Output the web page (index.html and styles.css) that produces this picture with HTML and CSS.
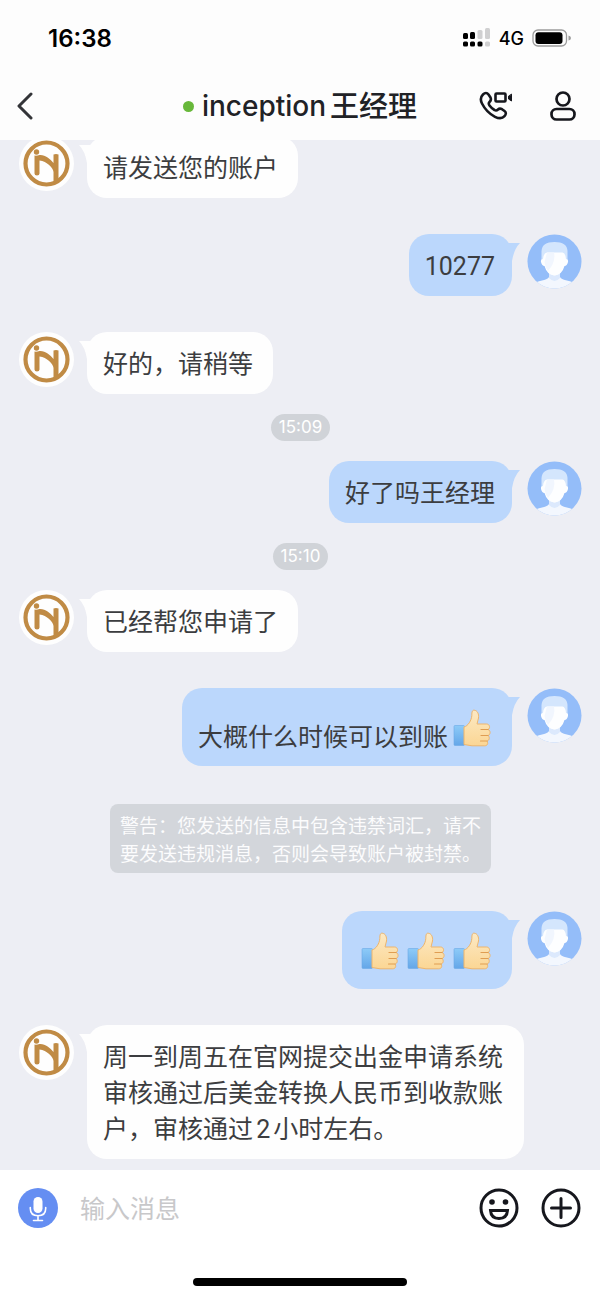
FILE: index.html
```html
<!DOCTYPE html>
<html lang="zh-CN">
<head>
<meta charset="utf-8">
<meta name="viewport" content="width=device-width, initial-scale=1">
<title>inception王经理</title>
<link rel="stylesheet" href="styles.css">
</head>
<body>
<!-- shared drawings -->
<svg class="sprite" aria-hidden="true">
  <defs>
    <linearGradient id="skin" x1="0" y1="0" x2="0" y2="1">
      <stop offset="0" stop-color="#fce9c4"/>
      <stop offset="1" stop-color="#fbd694"/>
    </linearGradient>
    <linearGradient id="cuff" x1="0" y1="0" x2="0" y2="1">
      <stop offset="0" stop-color="#8dcbf8"/>
      <stop offset="1" stop-color="#64a6e8"/>
    </linearGradient>
    <clipPath id="round"><circle cx="27.5" cy="27.5" r="27"/></clipPath>
  </defs>
  <symbol id="logo" viewBox="0 0 55 55">
    <circle cx="27.5" cy="27.5" r="27.5" fill="#fefefe"/>
    <circle cx="27.5" cy="27.5" r="21" fill="none" stroke="#c08b45" stroke-width="4.200"/>
    <circle cx="17.500" cy="16" r="2.700" fill="#c08b45"/>
    <path d="M15.500 19.500Q17.500 20 20.500 19C26 18.500 31 22.500 34.500 27V18.500Q37 17.500 39.500 18.500V43L34.500 47.500V36C34 31.500 28 25.500 20.500 24.500V37.500Q20.500 39.500 18 39.500Q15.500 39.500 15.500 37.500Z" fill="#c08b45"/>
  </symbol>
  <symbol id="user" viewBox="0 0 55 55">
    <g clip-path="url(#round)">
      <rect width="55" height="55" fill="#94bdf9"/>
      <path d="M8 49C13 46 20 46.500 22 43V35H33V43C35 46.500 42 46 47 49V55H8Z" fill="#f3f7fe"/>
      <path d="M22 37Q27.500 46 33 37V44Q27.500 50 22 44Z" fill="#dce9fd"/>
      <path d="M14.500 27V17Q15 8 27.500 8Q40 8 40.500 17V27Z" fill="#d4e6fd"/>
      <path d="M16 25Q13.500 25 14 28Q15 32 17.500 32Q20 41 27.500 41.500Q35 41 37.500 32Q40 32 41 28Q41.500 25 39 25Q38.500 19 35.500 18.500H20Q16.500 19 16 25Z" fill="#fdfeff"/>
      <path d="M20 18.500H27Q29 28 21 37Q18 33 17.500 28Z" fill="#f1f6fe"/>
    </g>
  </symbol>
  <symbol id="thumb" viewBox="0 0 38 38">
    <rect x="1" y="16.500" width="10.500" height="20" rx="1" fill="url(#cuff)" stroke="#6ba9e6" stroke-width=".6"/>
    <path d="M11 18C15 17 18.500 11.500 18.800 6.500C18.800 2.500 19.500 1 21.200 1.200C24.500 1.500 26 5 25.500 9L24 15H33.500C37 15 37.500 19.500 35 20.500C38 21.500 37.500 26 35 26.500C37 28 36.500 31.500 34 32C35.500 34.500 34.500 36.800 31.500 36.800H19C16 36.800 14 35.500 11 35.500Z" fill="url(#skin)" stroke="#eeb56c" stroke-width="1"/>
    <path d="M28 20.500H35M28 26.500H35M27.500 32H34" fill="none" stroke="#df9d52" stroke-width="1.200" stroke-linecap="round"/>
  </symbol>
  <symbol id="tail" viewBox="0 0 20 18">
    <path d="M0 0H20Q14 6 12 18H0Z"/>
  </symbol>
</svg>

<div class="app">
  <header>
    <div class="status-bar">
      <span class="clock">16:38</span>
      <div class="status-icons">
        <svg width="28" height="20" viewBox="0 0 28 20" aria-hidden="true">
          <rect x="0" y="5" width="5" height="6" rx="1.500"/>
          <rect x="7" y="4" width="5" height="7" rx="1.500"/>
          <rect x="14.500" y="2" width="5" height="9" rx="1.500" fill="#d0d0d1"/>
          <rect x="22" y="0" width="5" height="11" rx="1.500" fill="#d0d0d1"/>
          <rect x="0" y="13.500" width="5" height="5" rx="1.500"/>
          <rect x="7" y="13.500" width="5" height="5" rx="1.500"/>
          <rect x="14.500" y="13.500" width="5" height="5" rx="1.500"/>
          <rect x="22" y="13.500" width="5" height="5" rx="1.500" fill="#d0d0d1"/>
        </svg>
        <span>4G</span>
        <svg width="40" height="18" viewBox="0 0 40 18" aria-hidden="true">
          <rect x="1" y="1" width="33.500" height="16" rx="5" fill="none" stroke="#9c9c9c" stroke-width="1.300"/>
          <rect x="3.500" y="3.200" width="27" height="11.800" rx="3"/>
          <path d="M36.500 6.500Q39 7 39 9Q39 11 36.500 11.500Z" fill="#9c9c9c"/>
        </svg>
      </div>
    </div>
    <nav class="nav">
      <button class="icon-btn" aria-label="返回">
        <svg width="18" height="28" viewBox="0 0 18 28"><path d="M15 2L3 14L15 26" fill="none" stroke="#333438" stroke-width="3" stroke-linecap="round" stroke-linejoin="round"/></svg>
      </button>
      <h1><i class="online"></i>inception<span class="cn">王经理</span></h1>
      <div class="nav-actions">
        <button class="icon-btn" aria-label="通话">
          <svg width="34" height="30" viewBox="0 0 34 30" fill="none" stroke="#16171d" stroke-width="2.600" stroke-linejoin="round" stroke-linecap="round">
            <path d="M4 3.500C6 1.500 8 1.500 9.500 3.500L11.500 6.500C12.500 8.500 12 9.500 10.500 11C9.500 12 9.500 13 10.500 14.500C12 16.500 13.500 18 15.500 19C17 20 18 19.500 19 18.500C20 17.500 21.500 17.300 23 18.200L25.500 20C27.500 21.500 27 23.500 25.500 25.200C23 28 19.500 27.500 16 25.800C10.500 23 6 18.500 3 12.500C1.200 9 1.500 6 4 3.500Z"/>
            <rect x="16.500" y="2.500" width="10" height="8" rx="1"/>
            <path d="M32.500 3.500V10L29.500 8V5.500Z" fill="#16171d" stroke-width="1"/>
          </svg>
        </button>
        <button class="icon-btn" aria-label="资料">
          <svg width="26" height="30" viewBox="0 0 26 30" fill="none" stroke="#16171d" stroke-width="2.700">
            <circle cx="13" cy="8" r="6.500"/>
            <rect x="1.500" y="18" width="23" height="10.500" rx="5"/>
          </svg>
        </button>
      </div>
    </nav>
  </header>

  <main class="chat">
    <div class="msg">
      <svg class="avatar"><use href="#logo"/></svg>
      <div class="bubble"><svg class="tail"><use href="#tail"/></svg>请发送您的账户</div>
    </div>
    <div class="msg mine">
      <svg class="avatar"><use href="#user"/></svg>
      <div class="bubble"><svg class="tail"><use href="#tail"/></svg>10277</div>
    </div>
    <div class="msg">
      <svg class="avatar"><use href="#logo"/></svg>
      <div class="bubble"><svg class="tail"><use href="#tail"/></svg>好的，请稍等</div>
    </div>
    <time class="time">15:09</time>
    <div class="msg mine">
      <svg class="avatar"><use href="#user"/></svg>
      <div class="bubble"><svg class="tail"><use href="#tail"/></svg>好了吗王经理</div>
    </div>
    <time class="time">15:10</time>
    <div class="msg">
      <svg class="avatar"><use href="#logo"/></svg>
      <div class="bubble"><svg class="tail"><use href="#tail"/></svg>已经帮您申请了</div>
    </div>
    <div class="msg mine">
      <svg class="avatar"><use href="#user"/></svg>
      <div class="bubble with-emoji"><svg class="tail"><use href="#tail"/></svg><span>大概什么时候可以到账</span><svg class="emoji"><use href="#thumb"/></svg></div>
    </div>
    <p class="notice">警告：您发送的信息中包含违禁词汇，请不要发送违规消息，否则会导致账户被封禁。</p>
    <div class="msg mine">
      <svg class="avatar"><use href="#user"/></svg>
      <div class="bubble with-emoji"><svg class="tail"><use href="#tail"/></svg><svg class="emoji"><use href="#thumb"/></svg><svg class="emoji"><use href="#thumb"/></svg><svg class="emoji"><use href="#thumb"/></svg></div>
    </div>
    <div class="msg">
      <svg class="avatar"><use href="#logo"/></svg>
      <div class="bubble"><svg class="tail"><use href="#tail"/></svg>周一到周五在官网提交出金申请系统审核通过后美金转换人民币到收款账户，审核通过2小时左右。</div>
    </div>
  </main>

  <footer>
    <form class="composer">
      <button type="button" class="icon-btn" aria-label="语音">
        <svg width="40" height="40" viewBox="0 0 40 40">
          <circle cx="20" cy="20" r="20" fill="#658ef2"/>
          <rect x="15.500" y="9" width="9" height="16" rx="4.500" fill="#fff"/>
          <path d="M12.300 19.500V20.500Q12.300 27.800 20 27.800Q27.700 27.800 27.700 20.500V19.500M20 28V32M15.500 32.500H24.500" fill="none" stroke="#fff" stroke-width="1.600" stroke-linecap="round"/>
        </svg>
      </button>
      <input type="text" placeholder="输入消息" aria-label="输入消息">
      <button type="button" class="icon-btn" aria-label="表情">
        <svg width="40" height="40" viewBox="0 0 40 40" fill="none" stroke="#16171d" stroke-width="3">
          <circle cx="20" cy="20" r="18"/>
          <circle cx="13" cy="14" r="2.800" fill="#16171d" stroke="none"/>
          <circle cx="26.500" cy="14" r="2.800" fill="#16171d" stroke="none"/>
          <path d="M11.500 22.500H28.500Q28 30.500 20 30.500Q12 30.500 11.500 22.500Z"/>
        </svg>
      </button>
      <button type="button" class="icon-btn" aria-label="更多">
        <svg width="40" height="40" viewBox="0 0 40 40" fill="none" stroke="#16171d" stroke-width="3" stroke-linecap="round">
          <circle cx="20" cy="20" r="18"/>
          <path d="M20 10.500V29.500M10.500 20H29.500"/>
        </svg>
      </button>
    </form>
    <div class="home-bar"></div>
  </footer>
</div>
</body>
</html>
```

FILE: styles.css
```css
* {
  box-sizing: border-box;
}
body {
  margin: 0;
  font-family: Roboto, "Noto Sans CJK SC", sans-serif;
  color: #3c3d40;
  background: #edeef4;
}
.sprite {
  position: absolute;
  width: 0;
  height: 0;
}
.app {
  display: flex;
  flex-direction: column;
  height: 100vh;
}
header {
  background: #fdfdfd;
}
.status-bar {
  display: flex;
  justify-content: space-between;
  align-items: center;
  height: 76px;
  padding: 0 28px 0 48px;
  color: #000;
  font-family: Inter, sans-serif;
}
.clock {
  font-size: 24px;
  font-weight: 600;
}
.status-icons {
  display: flex;
  align-items: center;
  gap: 8px;
  font-size: 18px;
  font-weight: 500;
}
.nav {
  display: grid;
  grid-template-columns: 1fr auto 1fr;
  align-items: center;
  height: 64px;
  padding: 0 16px 4px;
}
.nav h1 {
  display: flex;
  align-items: center;
  margin: 0;
  font-family: Inter, "Noto Sans CJK SC", sans-serif;
  font-size: 28px;
  line-height: 40px;
  font-weight: 500;
  color: #212226;
}
.nav .cn {
  padding-top: 2px;
  margin-left: 4px;
  font-size: 29px;
}
.online {
  width: 11px;
  height: 11px;
  margin-right: 8px;
  border-radius: 50%;
  background: #68b83a;
}
.nav-actions {
  display: flex;
  justify-content: flex-end;
  gap: 37px;
  padding-right: 8px;
}
.icon-btn {
  display: flex;
  flex: none;
  justify-self: start;
  padding: 0;
  border: none;
  background: none;
  cursor: pointer;
}

.chat {
  flex: 1;
  min-height: 0;
  overflow: hidden;
  display: flex;
  flex-direction: column;
  justify-content: flex-end;
  padding: 0 18px 11px 19px;
}
.msg {
  display: flex;
  flex: none;
  align-items: flex-start;
  gap: 13px;
  margin-right: 58px;
}
.msg.mine {
  flex-direction: row-reverse;
  gap: 15px;
  margin-right: 0;
}
.msg + .msg {
  margin-top: 36px;
}
.avatar {
  flex: none;
  width: 55px;
  height: 55px;
}
.bubble {
  position: relative;
  padding: 15px 20px 11px 16px;
  border-radius: 20px;
  background: #fefefe;
  font-size: 25px;
  line-height: 36px;
  text-autospace: normal;
}
.mine .bubble {
  padding: 15px 17px 11px 16px;
  background: #bbd7fc;
}
.tail {
  position: absolute;
  top: 9px;
  left: -8px;
  width: 20px;
  height: 18px;
  fill: #fefefe;
  transform: scaleX(-1);
}
.mine .tail {
  left: auto;
  right: -8px;
  fill: #bbd7fc;
  transform: none;
}
.mine .with-emoji {
  display: flex;
  align-items: flex-end;
  gap: 8px;
  min-height: 78px;
  padding: 12px 21px 10px 16px;
}
.emoji {
  width: 38px;
  height: 38px;
  margin-bottom: 9px;
}
.emoji:nth-child(2) {
  margin-left: 3px;
}
.with-emoji span + .emoji {
  margin-left: -3px;
}
.time {
  flex: none;
  align-self: center;
  margin: 20px 0;
  padding: 0 8px;
  border-radius: 14px;
  background: #d0d3d8;
  color: #fff;
  font-family: Inter, sans-serif;
  font-size: 17px;
  line-height: 27px;
}
.notice {
  flex: none;
  align-self: center;
  max-width: 381px;
  margin: 38px 0;
  padding: 9px 10px 4px;
  border-radius: 8px;
  background: #d3d6db;
  color: #fcfcfd;
  font-size: 19px;
  line-height: 28px;
}

footer {
  background: #fff;
}
.composer {
  display: flex;
  align-items: center;
  gap: 22px;
  height: 76px;
  padding: 0 19px 0 18px;
}
.composer input {
  flex: 1;
  min-width: 0;
  padding: 2px 0 0;
  border: none;
  outline: none;
  background: none;
  font: inherit;
  font-size: 25px;
}
.composer input::placeholder {
  color: #c8c8ca;
}
.home-bar {
  width: 214px;
  height: 8px;
  margin: 32px auto 12px;
  border-radius: 4px;
  background: #000;
}
```
